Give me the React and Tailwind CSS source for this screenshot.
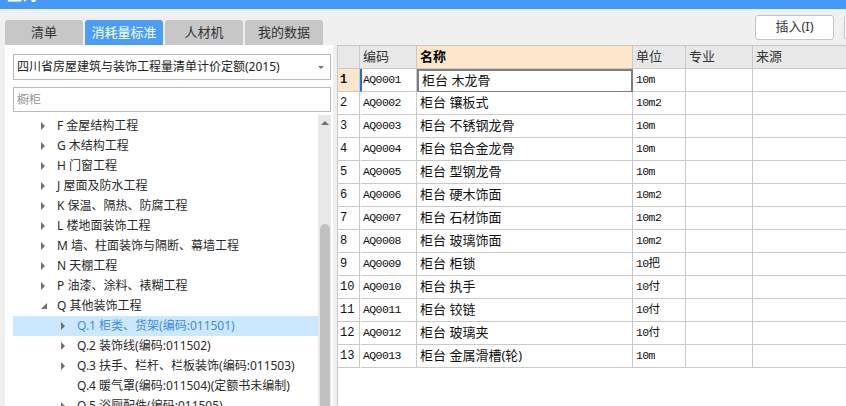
import React from "react";

const tabs = ["清单", "消耗量标准", "人材机", "我的数据"];

const tree = [
  { t: "F 金屋结构工程", lv: 1, a: "r" },
  { t: "G 木结构工程", lv: 1, a: "r" },
  { t: "H 门窗工程", lv: 1, a: "r" },
  { t: "J 屋面及防水工程", lv: 1, a: "r" },
  { t: "K 保温、隔热、防腐工程", lv: 1, a: "r" },
  { t: "L 楼地面装饰工程", lv: 1, a: "r" },
  { t: "M 墙、柱面装饰与隔断、幕墙工程", lv: 1, a: "r" },
  { t: "N 天棚工程", lv: 1, a: "r" },
  { t: "P 油漆、涂料、裱糊工程", lv: 1, a: "r" },
  { t: "Q 其他装饰工程", lv: 1, a: "d" },
  { t: "Q.1 柜类、货架(编码:011501)", lv: 2, a: "r", sel: true },
  { t: "Q.2 装饰线(编码:011502)", lv: 2, a: "r" },
  { t: "Q.3 扶手、栏杆、栏板装饰(编码:011503)", lv: 2, a: "r" },
  { t: "Q.4 暖气罩(编码:011504)(定额书未编制)", lv: 2, a: "" },
  { t: "Q.5 浴厕配件(编码:011505)", lv: 2, a: "r" },
];

const rows = [
  ["AQ0001", "柜台 木龙骨", "10m"],
  ["AQ0002", "柜台 镶板式", "10m2"],
  ["AQ0003", "柜台 不锈钢龙骨", "10m"],
  ["AQ0004", "柜台 铝合金龙骨", "10m"],
  ["AQ0005", "柜台 型钢龙骨", "10m"],
  ["AQ0006", "柜台 硬木饰面", "10m2"],
  ["AQ0007", "柜台 石材饰面", "10m2"],
  ["AQ0008", "柜台 玻璃饰面", "10m2"],
  ["AQ0009", "柜台 柜锁", "10把"],
  ["AQ0010", "柜台 执手", "10付"],
  ["AQ0011", "柜台 铰链", "10付"],
  ["AQ0012", "柜台 玻璃夹", "10付"],
  ["AQ0013", "柜台 金属滑槽(轮)", "10m"],
];

const cols = "grid grid-cols-[22px_57px_216px_53px_67px_1fr]";
const cjk = "font-['Noto_Sans','Noto_Sans_CJK_SC',sans-serif]";
const mono = "font-['Liberation_Mono','Noto_Sans_CJK_SC',monospace]";

function Arrow({ a }) {
  if (a === "r")
    return <span className="w-0 h-0 border-y-[4px] border-y-transparent border-l-[4px] border-l-[#707070]" />;
  if (a === "d")
    return (
      <svg width="6" height="6" viewBox="0 0 6 6">
        <polygon points="6,0 6,6 0,6" fill="#707070" />
      </svg>
    );
  return null;
}

export default function App() {
  return (
    <div className={`w-[846px] h-[406px] overflow-hidden bg-[#f0f0f0] flex flex-col ${cjk}`}>
      <div className="h-[9px] bg-[#4499fa] overflow-hidden shrink-0">
        <div className="mt-[-16px] ml-[7px] text-white text-[15px] leading-[20px] font-bold">查询</div>
      </div>
      <div className="flex flex-1 min-h-0">
        <div className="w-[333px] pl-[5px] pt-[11px] flex flex-col">
          <div className="flex gap-[2px] h-[25px]">
            {tabs.map((t, i) => (
              <div
                key={t}
                className={`w-[78px] rounded-t-[3px] flex items-center justify-center text-[13px] ${
                  i === 1 ? "bg-[#4b9ef7] text-white" : "bg-[#c7c7c7] text-[#333]"
                }`}
              >
                {t}
              </div>
            ))}
          </div>
          <div className="flex-1 bg-white pt-[9px] pl-[8px] flex flex-col min-h-0">
            <div className="w-[318px] h-[26px] border border-[#b9b9b9] flex items-center justify-between pl-[3px] pr-[6px] text-[12px] text-[#222]">
              <span>四川省房屋建筑与装饰工程量清单计价定额(2015)</span>
              <span className="w-0 h-0 border-x-[3px] border-x-transparent border-t-[3px] border-t-[#777]" />
            </div>
            <div className="w-[318px] h-[25px] mt-[7px] border border-[#b9b9b9] flex items-center pl-[3px] text-[12px] text-[#9a9a9a]">
              橱柜
            </div>
            <div className="flex mt-[3px] flex-1 min-h-0">
              <div className="w-[305px] pt-[1px]">
                {tree.map((n) => (
                  <div
                    key={n.t}
                    className={`h-[20px] flex items-center text-[12px] ${n.sel ? "bg-[#cce8ff] text-[#3d8de3]" : "text-[#2a2a2a]"}`}
                  >
                    <span className={`flex items-center ${n.lv === 1 ? "w-[44px] pl-[28px]" : "w-[64px] pl-[48px]"}`}>
                      <Arrow a={n.a} />
                    </span>
                    <span className="whitespace-nowrap">{n.t}</span>
                  </div>
                ))}
              </div>
              <div className="w-[13px] bg-[#e8e8e8] flex flex-col items-center">
                <span className="mt-[6px] w-0 h-0 border-x-[4px] border-x-transparent border-b-[4px] border-b-[#707070]" />
                <div className="mt-[99px] w-[10px] flex-1 bg-[#c1c1c1] rounded-t-[5px]" />
              </div>
            </div>
          </div>
        </div>
        <div className="w-[4px]" />
        <div className="flex-1 flex flex-col min-w-0">
          <div className="h-[36px] flex items-center justify-end gap-[10px] mr-[-28px] shrink-0">
            <button className="w-[79px] h-[25px] bg-white border border-[#c4c4c4] rounded-[3px] text-[13px] text-[#333]">
              插入(I)
            </button>
            <button className="w-[30px] h-[25px] bg-white border border-[#c4c4c4] rounded-[3px]" />
          </div>
          <div className="flex-1 bg-white border-l border-t border-[#c9c9c9]">
            <div className={`${cols} h-[23px] text-[13px] text-[#333]`}>
              <div className="bg-[#e8e8e8] border-r border-b border-[#c9c9c9]" />
              <div className="bg-[#e8e8e8] border-r border-b border-[#c9c9c9] pl-[3px] flex items-center">编码</div>
              <div className="bg-[#fde6c9] border-r border-b border-[#c9c9c9] pl-[3px] flex items-center font-bold text-black">名称</div>
              <div className="bg-[#e8e8e8] border-r border-b border-[#c9c9c9] pl-[3px] flex items-center">单位</div>
              <div className="bg-[#e8e8e8] border-r border-b border-[#c9c9c9] pl-[3px] flex items-center">专业</div>
              <div className="bg-[#e8e8e8] border-b border-[#c9c9c9] pl-[3px] flex items-center">来源</div>
            </div>
            {rows.map((r, i) => (
              <div key={r[0]} className={`${cols} h-[23px] text-[#111]`}>
                <div
                  className={`border-r border-b border-[#c9c9c9] pl-[2px] flex items-center text-[12px] ${mono} ${
                    i === 0 ? "bg-[#fde6c9] font-bold" : ""
                  }`}
                >
                  {i + 1}
                </div>
                <div
                  className={`border-r border-b border-[#c9c9c9] pl-[1px] flex items-center text-[11.5px] tracking-[-0.6px] ${mono} ${
                    i === 0 ? "border-l-2 border-l-[#1f6fe6]" : "border-l-2 border-l-transparent"
                  }`}
                >
                  {r[0]}
                </div>
                <div
                  className={`border-b pl-[3px] flex items-center text-[13px] ${
                    i === 0 ? "border-2 border-[#7f7f7f] pl-[2px]" : "border-r border-[#c9c9c9]"
                  }`}
                >
                  {r[1]}
                </div>
                <div className={`border-r border-b border-[#c9c9c9] pl-[3px] flex items-center text-[11.5px] tracking-[-0.6px] ${mono}`}>
                  {r[2]}
                </div>
                <div className="border-r border-b border-[#c9c9c9]" />
                <div className="border-b border-[#c9c9c9]" />
              </div>
            ))}
          </div>
        </div>
      </div>
    </div>
  );
}
